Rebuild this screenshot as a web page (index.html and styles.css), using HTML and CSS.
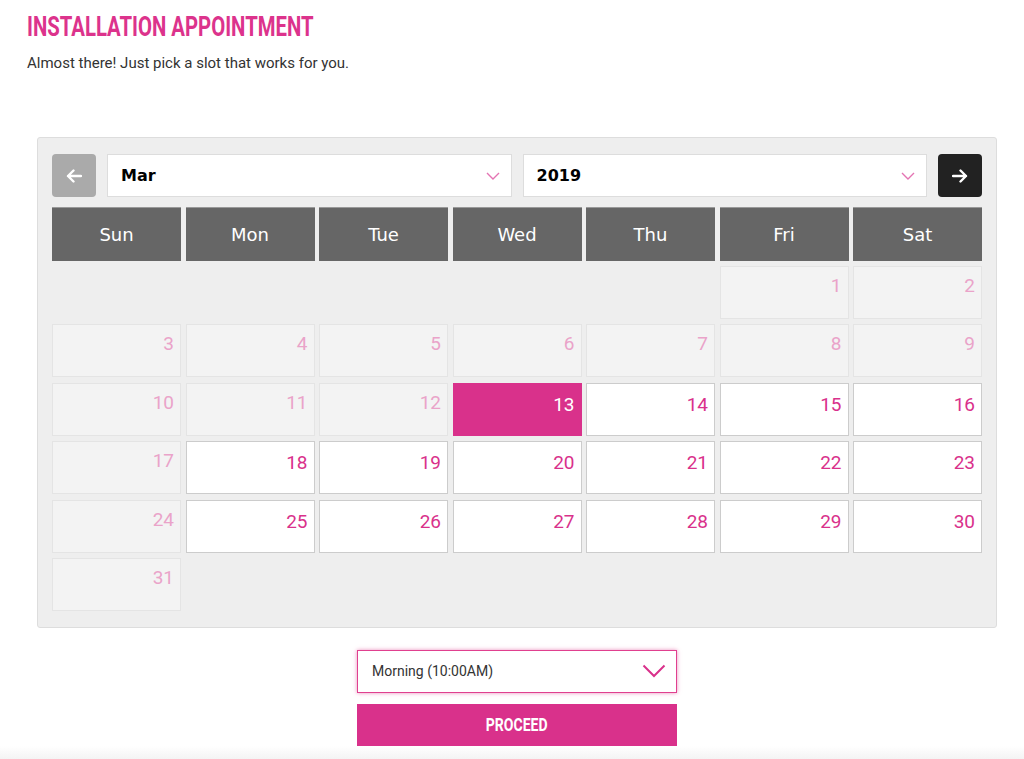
FILE: index.html
```html
<!DOCTYPE html>
<html lang="en">
<head>
    <meta charset="UTF-8">
    <meta name="viewport" content="width=device-width, initial-scale=1.0">
    <title>Installation Appointment</title>
    <link rel="stylesheet" href="styles.css">
</head>
<body>
    <div class="page">
        <h1 class="title"><span>INSTALLATION APPOINTMENT</span></h1>
        <p class="subtitle">Almost there! Just pick a slot that works for you.</p>

        <!-- Calendar -->
        <div class="calendar">
            <div class="cal-nav">
                <button class="nav-btn prev" type="button">
                    <svg width="16" height="14" viewBox="0 0 16 14"><path d="M15 7H2M7.5 1.5L2 7l5.5 5.5" fill="none" stroke="#fff" stroke-width="2.4" stroke-linecap="round" stroke-linejoin="round"/></svg>
                </button>
                <div class="cal-select">
                    <span>Mar</span>
                    <svg class="chev" width="14" height="8" viewBox="0 0 14 8"><path d="M1 1l6 6 6-6" fill="none" stroke="#e474b3" stroke-width="1.4"/></svg>
                </div>
                <div class="cal-select">
                    <span>2019</span>
                    <svg class="chev" width="14" height="8" viewBox="0 0 14 8"><path d="M1 1l6 6 6-6" fill="none" stroke="#e474b3" stroke-width="1.4"/></svg>
                </div>
                <button class="nav-btn next" type="button">
                    <svg width="16" height="14" viewBox="0 0 16 14"><path d="M1 7h13M8.5 1.5L14 7l-5.5 5.5" fill="none" stroke="#fff" stroke-width="2.4" stroke-linecap="round" stroke-linejoin="round"/></svg>
                </button>
            </div>

            <div class="weekdays">
                <div>Sun</div><div>Mon</div><div>Tue</div><div>Wed</div><div>Thu</div><div>Fri</div><div>Sat</div>
            </div>

            <div class="days" id="days"></div>
        </div>

        <!-- Time slot -->
        <div class="slot">
            <div class="slot-select">
                <span>Morning (10:00AM)</span>
                <svg width="24" height="14" viewBox="0 0 24 14"><path d="M1.5 1.5L12 12 22.5 1.5" fill="none" stroke="#d9318b" stroke-width="2"/></svg>
            </div>
            <button class="proceed" type="button"><span>PROCEED</span></button>
        </div>
    </div>
    <div class="footer-shadow"></div>

    <script>
        // March 2019 starts on a Friday, today is the 13th, no installs on Sundays
        const days = document.getElementById('days');
        const firstDay = 5;
        const today = 13;

        for (let i = 0; i < firstDay; i++) {
            const empty = document.createElement('div');
            empty.className = 'day empty';
            days.appendChild(empty);
        }

        for (let d = 1; d <= 31; d++) {
            const cell = document.createElement('div');
            const weekday = (firstDay + d - 1) % 7;
            cell.className = 'day';
            if (d < today || weekday === 0) cell.classList.add('past');
            else if (d === today) cell.classList.add('selected');
            else cell.classList.add('open');
            cell.textContent = d;
            days.appendChild(cell);
        }
    </script>
</body>
</html>
```

FILE: styles.css
```css
body {
    margin: 0;
    background: #fff;
    font-family: Roboto, "Liberation Sans", sans-serif;
    color: #333;
}
.page {
    padding: 10px 17px 0 27px;
}
.title {
    margin: 0;
    height: 34px;
    font-size: 28px;
    line-height: 34px;
    font-weight: 700;
    color: #dc338c;
    white-space: nowrap;
}
.title span {
    display: inline-block;
    transform: scaleX(0.725);
    transform-origin: left center;
}
.subtitle {
    margin: 10px 0 0;
    font-size: 15px;
    line-height: 18px;
    color: #333;
}
.calendar {
    width: 930px;
    margin: 65px 0 0 10px;
    padding: 16px 14px 16px;
    background: #eee;
    border: 1px solid #ddd;
    border-radius: 3px;
}
.cal-nav {
    display: flex;
    gap: 11px;
    height: 43px;
}
.nav-btn {
    width: 44px;
    height: 43px;
    border: none;
    border-radius: 4px;
    display: flex;
    align-items: center;
    justify-content: center;
    padding: 0;
    cursor: pointer;
}
.nav-btn.prev {
    background: #aaa;
}
.nav-btn.next {
    background: #222;
}
.cal-select {
    flex: 1;
    display: flex;
    align-items: center;
    justify-content: space-between;
    padding: 0 11px 0 13px;
    background: #fff;
    border: 1px solid #ddd;
    font-family: "DejaVu Sans", Verdana, sans-serif;
    font-size: 16px;
    font-weight: 700;
    color: #000;
}
.weekdays {
    display: grid;
    grid-template-columns: repeat(7, 1fr);
    column-gap: 4.5px;
    margin-top: 10px;
}
.weekdays div {
    height: 54px;
    line-height: 54px;
    text-align: center;
    background: #666;
    border-top: 1px solid #999;
    box-sizing: border-box;
    color: #fff;
    font-family: "DejaVu Sans", Verdana, sans-serif;
    font-size: 18px;
}
.days {
    display: grid;
    grid-template-columns: repeat(7, 1fr);
    grid-auto-rows: 53px;
    column-gap: 4.5px;
    row-gap: 5.4px;
    margin-top: 5px;
}
.day {
    box-sizing: border-box;
    padding: 8px 6px 0 0;
    text-align: right;
    font-size: 19px;
    line-height: 22px;
}
.day.past {
    background: #f3f3f3;
    border: 1px solid #e4e4e4;
    color: #eaa3c9;
}
.day.open {
    background: #fff;
    border: 1px solid #ccc;
    color: #d9318b;
    padding-top: 10px;
}
.day.selected {
    background: #d9318b;
    border: 1px solid #d9318b;
    color: #fff;
    padding-top: 10px;
}
.slot {
    width: 320px;
    margin: 22px 0 0 330px;
}
.slot-select {
    height: 43px;
    box-sizing: border-box;
    display: flex;
    align-items: center;
    justify-content: space-between;
    padding: 0 10px 0 14px;
    background: #fff;
    border: 1px solid #e0408f;
    box-shadow: 0 0 4px rgba(224, 64, 143, 0.6);
    font-size: 14px;
    color: #333;
}
.proceed {
    display: block;
    width: 320px;
    height: 42px;
    margin-top: 11px;
    border: none;
    background: #d9318b;
    color: #fff;
    font-family: Roboto, sans-serif;
    font-size: 18px;
    font-weight: 700;
    cursor: pointer;
}
.proceed span {
    display: inline-block;
    transform: scaleX(0.78);
}
.footer-shadow {
    height: 13px;
    background: linear-gradient(#fff, #f4f4f4);
}
```
